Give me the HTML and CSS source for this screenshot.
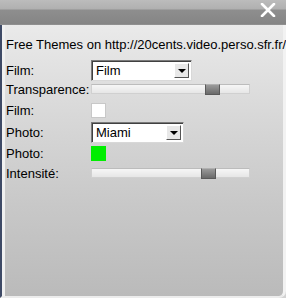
FILE: index.html
```html
<!DOCTYPE html>
<html lang="fr">
<head>
  <meta charset="UTF-8">
  <title>Options</title>
  <link rel="stylesheet" href="styles.css">
</head>
<body>
  <div class="win">
    <div class="head">
      <svg class="close" width="16" height="14" viewBox="0 0 16 14">
        <path d="M2 1 L14 13 M14 1 L2 13" stroke="#fff" stroke-width="2.6" stroke-linecap="round"/>
      </svg>
    </div>
    <div class="body">
      <p class="intro">Free Themes on http://20cents.video.perso.sfr.fr/</p>

      <div class="row r-sel">
        <span class="lbl">Film:</span>
        <div class="sel w100"><span>Film</span><i class="btn"></i></div>
      </div>
      <div class="row r-sld">
        <span class="lbl">Transparence:</span>
        <div class="track"><i class="thumb" style="left:113px"></i></div>
      </div>
      <div class="row r-box">
        <span class="lbl">Film:</span>
        <div class="swatch white"></div>
      </div>
      <div class="row r-sel">
        <span class="lbl">Photo:</span>
        <div class="sel w92"><span>Miami</span><i class="btn"></i></div>
      </div>
      <div class="row r-box">
        <span class="lbl">Photo:</span>
        <div class="swatch green"></div>
      </div>
      <div class="row r-sld">
        <span class="lbl">Intensité:</span>
        <div class="track"><i class="thumb" style="left:109px"></i></div>
      </div>
    </div>
  </div>
</body>
</html>
```

FILE: styles.css
```css
* { box-sizing: border-box; }
html, body { margin: 0; padding: 0; }
body { width: 286px; height: 298px; overflow: hidden; background: #d2d2d2; font-family: "Liberation Sans", Arial, sans-serif; color: #000; }

.win { height: 298px; display: flex; flex-direction: column; }

.head {
  height: 25px;
  background: linear-gradient(#bcbcbc 0, #b0b0b0 9px, #8e8e8e 10px, #858585 24px, #9a9a9a 25px);
  display: flex; justify-content: flex-end; align-items: flex-start;
  padding: 3px 10px 0 0;
}

.body {
  flex: 1;
  background: linear-gradient(#eaeaea 0, #d8d8d8 90px, #c8c8c8 180px, #bababa 272px);
  border-left: 2px solid #3e4a66;
  border-right: 3px solid #f2f2f2;
  border-bottom: 2px solid #ececec;
  border-bottom-right-radius: 7px;
  box-shadow: inset 3px 0 0 #f0f0f0;
  padding: 12px 0 0 4px;
}

.intro { margin: 0 0 7px; font-size: 13px; white-space: nowrap; }

.row { display: flex; align-items: center; font-size: 13px; }
.lbl { width: 85px; }
.r-sel { height: 22px; }
.r-sld { height: 14px; margin-bottom: 4px; }
.r-box { height: 21px; }
.r-sel + .r-sld { margin-top: 1px; }
.r-box + .r-sld { margin-top: 2px; }

/* selects */
.sel {
  height: 21px; background: #fff;
  border: 1px solid #7a7a7a; border-right-color: #d8d8d8; border-bottom-color: #d8d8d8;
  box-shadow: inset 1px 1px 0 #404040;
  display: flex; align-items: center; justify-content: space-between;
  padding: 0 2px 0 4px; font-size: 13px;
}
.w100 { width: 101px; }
.w92 { width: 93px; }
.btn {
  width: 15px; height: 15px; background: #e8e8e8;
  border: 1px solid #fff; border-right-color: #555; border-bottom-color: #555;
  position: relative;
}
.btn::after {
  content: ""; position: absolute; left: 3px; top: 5px;
  border-left: 4px solid transparent; border-right: 4px solid transparent; border-top: 4px solid #000;
}

/* sliders */
.track {
  width: 159px; height: 10px; position: relative;
  background: linear-gradient(#f6f6f6, #e6e6e6);
  border: 1px solid #d0d0d0; border-top-color: #bcbcbc;
}
.thumb {
  position: absolute; top: -1px; width: 15px; height: 11px;
  background: linear-gradient(#9a9a9a, #6a6a6a);
  border: 1px solid #5a5a5a; border-top-color: #b0b0b0;
}

.swatch { width: 15px; height: 15px; }
.white { background: #fff; border: 1px solid #c8c8c8; }
.green { background: #00ee00; }
```
